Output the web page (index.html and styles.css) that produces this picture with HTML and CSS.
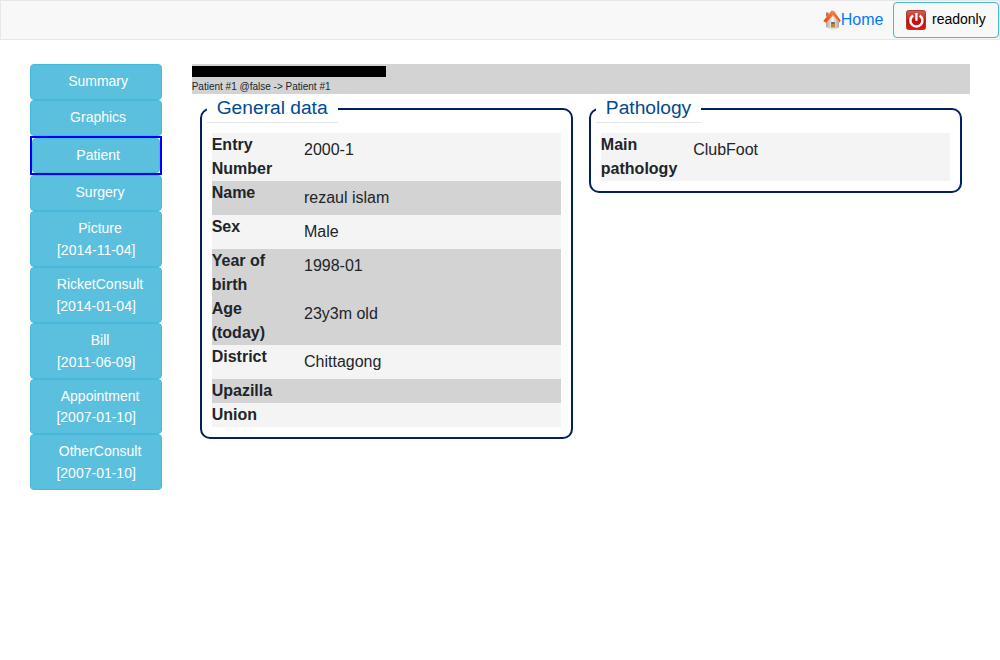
FILE: index.html
```
<!DOCTYPE html>
<html lang="en">
<head>
<meta charset="utf-8">
<title>Patient</title>
<link rel="stylesheet" href="styles.css">
</head>
<body>
<nav class="navbar">
  <a class="home">
    <svg width="18" height="20" viewBox="0 0 18 20">
      <defs>
        <linearGradient id="roof" x2="0" y2="1"><stop stop-color="#f48a50"/><stop offset="1" stop-color="#dc4a12"/></linearGradient>
        <linearGradient id="wall"><stop stop-color="#aaa69c"/><stop offset=".5" stop-color="#f5f3ee"/><stop offset="1" stop-color="#aaa8a2"/></linearGradient>
      </defs>
      <path d="M3 10 10 5l6 6v6.5L10 19.5 3 17z" fill="url(#wall)"/>
      <path d="M8 12h4v7H8z" fill="#b78950"/>
      <path d="M8.5 12h3v2h-3z" fill="#716b62"/>
      <path d="M7.5 17.5h5v2h-5z" fill="#e5e1db"/>
      <path d="M3 2.5h2.5v4H3z" fill="#b9775b"/>
      <path d="M8.5.5 11 1l6.7 9.5-1.2 2L10 5.5 3.5 13 .3 11z" fill="url(#roof)"/>
      <path d="M10 5.5 16.5 12.3M10 5.5 3.5 12.8" stroke="#f7c3a4" stroke-width=".8" fill="none"/>
    </svg><span>Home</span>
  </a>
  <button class="user">
    <svg width="20" height="20" viewBox="0 0 20 20">
      <defs><linearGradient id="red" x2="0" y2="1"><stop stop-color="#cf6259"/><stop offset=".45" stop-color="#cf211c"/><stop offset=".5" stop-color="#bd0d0b"/><stop offset="1" stop-color="#d81d18"/></linearGradient></defs>
      <rect x=".5" y=".5" width="19" height="19" rx="2" fill="url(#red)" stroke="#a83a34"/>
      <path d="M7.1 5.5a6 6 0 1 0 6.6 0" fill="none" stroke="#fff" stroke-width="2.5"/>
      <path d="M10.4 3v7.8" stroke="#fff" stroke-width="2.3"/>
    </svg><span>readonly</span>
  </button>
</nav>
<div class="page">
  <aside class="menu">
    <a class="btn">&nbsp;Summary</a>
    <a class="btn">&nbsp;Graphics</a>
    <div class="current"><a class="btn">&nbsp;Patient</a></div>
    <a class="btn">&nbsp;&nbsp;Surgery</a>
    <a class="btn dated">&nbsp;&nbsp;Picture<br>[2014-11-04]</a>
    <a class="btn dated">&nbsp;&nbsp;RicketConsult<br>[2014-01-04]</a>
    <a class="btn dated">&nbsp;&nbsp;Bill<br>[2011-06-09]</a>
    <a class="btn dated">&nbsp;&nbsp;Appointment<br>[2007-01-10]</a>
    <a class="btn dated">&nbsp;&nbsp;OtherConsult<br>[2007-01-10]</a>
  </aside>
  <main class="content">
    <header class="banner">
      <div class="redacted"></div>
      <div class="crumb">Patient #1 @false -&gt; Patient #1</div>
    </header>
    <div class="panels">
      <fieldset class="panel">
        <legend>General data</legend>
        <div class="row"><b>Entry Number</b><span>2000-1</span></div>
        <div class="row dark"><b>Name</b><span>rezaul islam</span></div>
        <div class="row"><b>Sex</b><span>Male</span></div>
        <div class="row dark"><b>Year of birth</b><span>1998-01</span></div>
        <div class="row dark"><b>Age (today)</b><span>23y3m old</span></div>
        <div class="row"><b>District</b><span>Chittagong</span></div>
        <div class="row dark"><b>Upazilla</b></div>
        <div class="row"><b>Union</b></div>
      </fieldset>
      <fieldset class="panel">
        <legend>Pathology</legend>
        <div class="row"><b>Main pathology</b><span>ClubFoot</span></div>
      </fieldset>
    </div>
  </main>
</div>
</body>
</html>
```
FILE: styles.css
```
* { box-sizing: border-box; }
body { margin: 0; background: #fff; color: #212529; font: 16px/24px "Liberation Sans", Arial, sans-serif; }
.navbar { display: flex; justify-content: flex-end; align-items: center; gap: 9.5px; height: 40px; border: 1px solid #e7e7e7; background: #f8f8f8; }
.home { display: flex; align-items: center; color: #007bff; }
.user { display: flex; align-items: center; gap: 6px; width: 106px; height: 36px; padding: 0 0 0 12px; border: 1px solid #46b8da; border-radius: 4px; background: #f8f8f8; color: #000; font: 14px/21px "Liberation Sans", Arial, sans-serif; }
.user span { padding-bottom: 1px; }
.page { display: flex; gap: 29.7px; padding: 24px 30px 0; }
.menu { width: 132.3px; flex: none; }
.btn { display: block; height: 35.8px; padding-top: 6px; border: 1px solid #46b8da; border-radius: 4px; background: #5bc0de; color: #fff; font-size: 14px; line-height: 21.8px; text-align: center; }
.dated { height: 55.8px; }
.current { border: 2px solid #00f; }
.content { flex: 1; margin-left: -0.3px; }
.banner { height: 30px; padding-top: 2px; background: #d3d3d3; font-size: 10px; line-height: 15px; }
.redacted { width: 194px; height: 11px; margin-bottom: 2px; background: #000; }
.panels { display: grid; grid-template-columns: 1fr 1fr; gap: 16px; align-items: start; padding: 0 8px; }
.panel { min-width: 0; margin: 0; padding: 10px; border: 2px solid #002060; border-radius: 10px; }
legend { height: 29px; margin-left: -5px; padding: 0 10px; border-bottom: 1px solid #e5e5e5; color: #004a91; font-size: 19.2px; line-height: 28px; }
.row { display: grid; grid-template-columns: 92.3px 1fr; background: #f4f4f4; }
.row b { width: 77px; }
.row span { padding: 5px 0; }
.dark { background: #d3d3d3; }
```
